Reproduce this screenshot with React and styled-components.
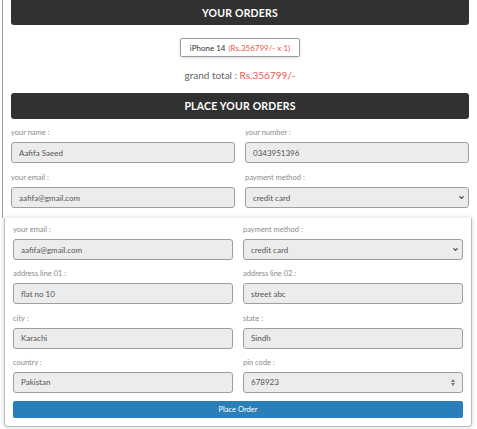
import React from "react";
import styled, { createGlobalStyle } from "styled-components";
import { ChevronDown } from "lucide-react";

const GlobalStyle = createGlobalStyle`
  body {
    margin: 0;
    background: #fff;
    font-family: Lato, "Open Sans", sans-serif;
    overflow: hidden;
  }
`;

const Page = styled.div`
  width: 477px;
  height: 429px;
  overflow: hidden;
`;

const OrdersPanel = styled.section`
  height: 218px;
  overflow: hidden;
  margin-left: 2px;
  border-left: 1px solid #9a9a9a;
  padding: 0 8px;
`;

const Heading = styled.h2`
  margin: 0;
  height: ${(p) => p.$h}px;
  display: flex;
  align-items: center;
  justify-content: center;
  background: #313131;
  border-radius: ${(p) => (p.$top ? "0 0 3px 3px" : "3px")};
  color: #fff;
  font-size: 10.5px;
  font-weight: 700;
  letter-spacing: 0.2px;
`;

const ItemRow = styled.div`
  display: flex;
  justify-content: center;
  margin-top: 13px;
`;

const ItemBox = styled.div`
  height: 19px;
  box-sizing: border-box;
  padding: 0 9px;
  display: flex;
  align-items: center;
  gap: 3px;
  border: 1px solid #9c9c9c;
  border-radius: 2px;
  box-shadow: 0 1px 3px rgba(0, 0, 0, 0.15);
  font-size: 8px;
  color: #333;
`;

const Price = styled.span`
  color: #e9574b;
`;

const GrandTotal = styled.div`
  margin: 11px 0 11px;
  text-align: center;
  font-size: 10px;
  line-height: 14px;
  color: #666;
`;

const FieldGrid = styled.div`
  display: grid;
  grid-template-columns: 1fr 1fr;
  column-gap: 10px;
  row-gap: ${(p) => p.$rowGap}px;
  margin-top: ${(p) => p.$top || 0}px;
`;

const Field = styled.label`
  display: block;
`;

const Label = styled.span`
  display: block;
  font-size: 7.5px;
  line-height: 10px;
  color: #8a8a8a;
  margin-bottom: 4px;
`;

const Control = styled.div`
  position: relative;
`;

const inputLook = `
  display: block;
  width: 100%;
  height: 21px;
  box-sizing: border-box;
  margin: 0;
  border: 1px solid #9e9e9e;
  border-radius: 3px;
  background: #ececec;
  font-family: inherit;
  font-size: 8px;
  color: #555;
  outline: none;
`;

const Input = styled.input`
  ${inputLook}
  padding: 0 7px;
  appearance: textfield;

  &::-webkit-inner-spin-button,
  &::-webkit-outer-spin-button {
    -webkit-appearance: none;
    margin: 0;
  }
`;

const Select = styled.select`
  ${inputLook}
  appearance: none;
  padding: 0 7px;
`;

const SelectArrow = styled(ChevronDown)`
  position: absolute;
  right: 4px;
  top: 7px;
  color: #444;
  pointer-events: none;
`;

const Spinner = styled.svg`
  position: absolute;
  right: 8px;
  top: 7px;
  pointer-events: none;
`;

const FormCard = styled.section`
  margin: 0 5px 0 4px;
  padding: 7px 8px 8px;
  border: 1px solid #bdbdbd;
  border-top: none;
  border-radius: 0 0 4px 4px;
  box-shadow: 0 0 5px rgba(0, 0, 0, 0.18);
`;

const SubmitButton = styled.button`
  display: block;
  width: 100%;
  height: 17px;
  margin-top: 8px;
  padding: 0;
  border: none;
  border-radius: 2px;
  background: #2a7fba;
  color: #fff;
  font-family: inherit;
  font-size: 7.5px;
`;

function TextField({ label, value, type = "text" }) {
  return (
    <Field>
      <Label>{label}</Label>
      <Control>
        <Input type={type} defaultValue={value} />
        {type === "number" && (
          <Spinner width="4" height="7" viewBox="0 0 4 7">
            <path d="M0 3 L2 0 L4 3 Z M0 4 L2 7 L4 4 Z" fill="#777" />
          </Spinner>
        )}
      </Control>
    </Field>
  );
}

function PaymentField() {
  return (
    <Field>
      <Label>payment method :</Label>
      <Control>
        <Select defaultValue="credit card">
          <option>credit card</option>
          <option>cash on delivery</option>
          <option>paypal</option>
        </Select>
        <SelectArrow size={7} strokeWidth={4} />
      </Control>
    </Field>
  );
}

export default function App() {
  return (
    <>
      <GlobalStyle />
      <Page>
        <OrdersPanel>
          <Heading $h={25} $top>YOUR ORDERS</Heading>
          <ItemRow>
            <ItemBox>
              <span>iPhone 14</span>
              <Price>(Rs.356799/- x 1)</Price>
            </ItemBox>
          </ItemRow>
          <GrandTotal>
            grand total : <Price>Rs.356799/-</Price>
          </GrandTotal>
          <Heading $h={26}>PLACE YOUR ORDERS</Heading>
          <FieldGrid $rowGap={10} $top={9}>
            <TextField label="your name :" value="Aafifa Saeed" />
            <TextField label="your number :" value="0343951396" />
            <TextField label="your email :" value="aafifa@gmail.com" />
            <PaymentField />
          </FieldGrid>
        </OrdersPanel>

        <FormCard>
          <FieldGrid $rowGap={9.3}>
            <TextField label="your email :" value="aafifa@gmail.com" />
            <PaymentField />
            <TextField label="address line 01 :" value="flat no 10" />
            <TextField label="address line 02 :" value="street abc" />
            <TextField label="city :" value="Karachi" />
            <TextField label="state :" value="Sindh" />
            <TextField label="country :" value="Pakistan" />
            <TextField label="pin code :" value="678923" type="number" />
          </FieldGrid>
          <SubmitButton type="button">Place Order</SubmitButton>
        </FormCard>
      </Page>
    </>
  );
}
